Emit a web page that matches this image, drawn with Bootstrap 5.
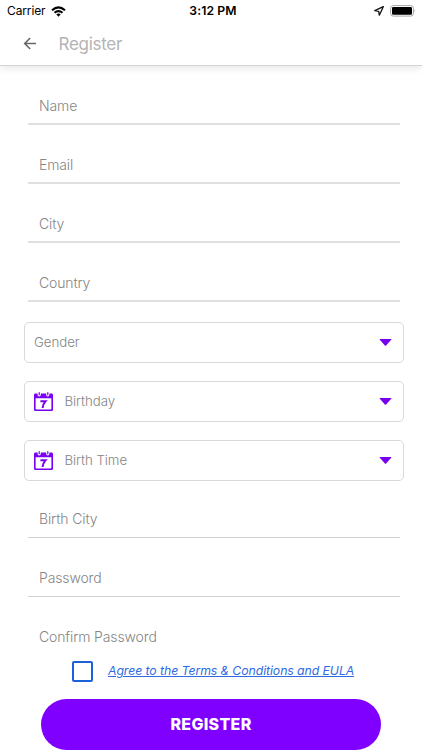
<!DOCTYPE html>
<html lang="en">
<head>
<meta charset="utf-8">
<meta name="viewport" content="width=device-width, initial-scale=1">
<title>Register</title>
<link href="https://cdn.jsdelivr.net/npm/bootstrap@5.3.0/dist/css/bootstrap.min.css" rel="stylesheet">
<style>
body{font-family:Inter,"Liberation Sans",sans-serif;background:#fff;height:750px;overflow:hidden;color:#000}
.app-head{height:66px;border-bottom:1px solid #d4d4d4;box-shadow:0 2px 8px rgba(0,0,0,.1)}
.status{height:22px;font-size:12px;line-height:22px}
.status .carrier{padding-left:7px;width:142px;gap:5px;letter-spacing:-.12px}
.status .clock{font-weight:600;font-size:12.2px;letter-spacing:.13px}
.status .power{width:138px;padding-right:5px;gap:6px}
.bar{height:43px;padding-left:23px}
.bar h1{font-size:17px;font-weight:400;color:#b4b4b4;margin:0 0 0 21.5px;line-height:42px;letter-spacing:-.28px}
.slot{height:59px}
.line-input{margin:0 22px 0 28px;height:100%;padding:20px 11px 0;border-bottom:2px solid #e0e0e0}
.line-input.thin{border-bottom:1px solid #d2d2d2}
.slot input{border:0;padding:0;background:transparent;width:100%;height:39px;line-height:39px;outline:0}
.slot input,.slot input::placeholder,.pick{font-size:14px;font-weight:300;color:#858585;opacity:1;letter-spacing:-.13px}
.pick{margin:20px 18px 0 24px;height:41px;width:auto;border:1px solid #d9d9d9;border-radius:5px;padding:0 11px 0 9px;background:#fff;font-size:13.3px;letter-spacing:-.06px}
.pick span{padding-top:1px}
.pick .cal{margin-right:11.5px}
.last{height:62px}
.last .line-input{border:0}
.agree{height:24px;padding-left:72px}
.box{width:21px;height:21px;border:2px solid #1c61dc;border-radius:2px;appearance:none;margin:0}
.agree a{font-size:12.3px;font-style:italic;color:#2f6bdf;margin-left:15px;padding-top:1px;text-underline-offset:1px;white-space:nowrap;letter-spacing:-.09px}
.go{margin:16px 41px 0;padding:0 0 2px;height:51px;background:#7f00ff;color:#fff;border:0;border-radius:26px;font-size:16px;font-weight:800;letter-spacing:.3px}
</style>
<script src="https://cdn.jsdelivr.net/npm/bootstrap@5.3.0/dist/js/bootstrap.bundle.min.js"></script>
</head>
<body>
<svg class="d-none">
  <symbol id="cal" viewBox="0 0 19 19"><path fill="#7900f2" fill-rule="evenodd" d="M1 1.500h2.600v1.300a1.600 1.600 0 0 0 3.200 0V1.500h5.400v1.300a1.600 1.600 0 0 0 3.200 0V1.500H18l1 1v15q0 1.500-1.500 1.500h-16Q0 19 0 17.500v-15zM1.600 6.200v10.500q0 .7.700.7h14.400q.7 0 .7-.7V6.200z"/><path fill="none" stroke="#7900f2" stroke-width="1.200" stroke-linecap="round" d="M5.200.6v2.200M13.800.6v2.200"/><path fill="none" stroke="#7900f2" stroke-width="2" d="M6.400 9.200h5.200q-2.500 2.800-3 6.800"/></symbol>
  <symbol id="tri" viewBox="0 0 12 7"><path fill="#7900ee" d="M.6 0h10.800q.9 0 .3.700L6.600 6.500q-.6.600-1.200 0L.3.700Q-.3 0 .6 0z"/></symbol>
</svg>
<header class="app-head bg-white">
  <div class="status d-flex justify-content-between">
    <div class="carrier d-flex align-items-center"><span>Carrier</span>
      <svg width="15" height="11" viewBox="0 0 15 11"><g fill="none" stroke="#000" stroke-width="2.100"><path d="M1 4.200q6.500-5.700 13 0"/><path d="M3.500 6.800q4-3.500 8 0"/></g><path d="M5.300 8.300q2.200-1.700 4.400 0L7.500 10.700z"/></svg>
    </div>
    <div class="clock">3:12 PM</div>
    <div class="power d-flex align-items-center justify-content-end">
      <svg width="10" height="10" viewBox="0 0 10 10"><path fill="none" stroke="#111" stroke-width="1.300" stroke-linejoin="round" d="M9.300.7.800 4.700l3.900.6.600 3.900z"/></svg>
      <svg width="27" height="12" viewBox="0 0 27 12"><rect x=".6" y=".6" width="22.800" height="10.500" rx="2.600" fill="none" stroke="#a6a6a6"/><rect x="2" y="2" width="20" height="7.700" rx="1.200"/><path fill="#a6a6a6" d="M24.600 4q1.400 1.800 0 3.600z"/></svg>
    </div>
  </div>
  <div class="bar d-flex align-items-center">
    <svg width="14" height="14" viewBox="0 0 14 14"><path fill="none" stroke="#686868" stroke-width="1.600" d="M13 6.500H2M7.200 1 1.700 6.500l5.500 5.500"/></svg>
    <h1>Register</h1>
  </div>
</header>
<main>
  <div class="slot"><div class="line-input"><input placeholder="Name"></div></div>
  <div class="slot"><div class="line-input"><input placeholder="Email"></div></div>
  <div class="slot"><div class="line-input"><input placeholder="City"></div></div>
  <div class="slot"><div class="line-input"><input placeholder="Country"></div></div>
  <div class="slot d-flex"><div class="pick d-flex align-items-center flex-fill"><span>Gender</span><svg class="ms-auto" width="13" height="7"><use href="#tri"/></svg></div></div>
  <div class="slot d-flex"><div class="pick d-flex align-items-center flex-fill"><svg class="cal" width="19" height="19"><use href="#cal"/></svg><span>Birthday</span><svg class="ms-auto" width="13" height="7"><use href="#tri"/></svg></div></div>
  <div class="slot d-flex"><div class="pick d-flex align-items-center flex-fill"><svg class="cal" width="19" height="19"><use href="#cal"/></svg><span>Birth Time</span><svg class="ms-auto" width="13" height="7"><use href="#tri"/></svg></div></div>
  <div class="slot"><div class="line-input thin"><input placeholder="Birth City"></div></div>
  <div class="slot"><div class="line-input thin"><input placeholder="Password"></div></div>
  <div class="slot last"><div class="line-input"><input placeholder="Confirm Password"></div></div>
  <div class="agree d-flex align-items-center"><input class="box" type="checkbox" aria-label="Agree"><a href="#">Agree to the Terms &amp; Conditions and EULA</a></div>
  <div class="d-flex"><button class="go flex-fill">REGISTER</button></div>
</main>
</body>
</html>
